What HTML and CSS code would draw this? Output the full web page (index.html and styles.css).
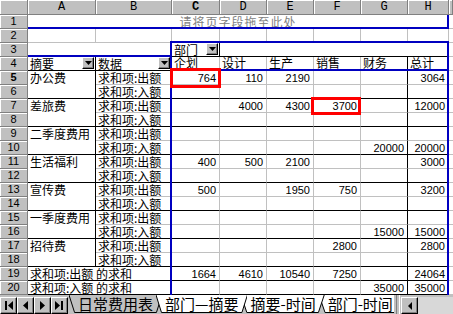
FILE: index.html
```html
<!DOCTYPE html>
<html>
<head>
<meta charset="utf-8">
<title>部门—摘要</title>
<link rel="stylesheet" href="styles.css">
</head>
<body>
<div class="sheet">
  <div class="grid">
    <div class="corner"></div>
    <div class="ch">A</div><div class="ch">B</div><div class="ch sel">C</div><div class="ch">D</div><div class="ch">E</div><div class="ch">F</div><div class="ch">G</div><div class="ch">H</div><div class="ch"></div>

    <div class="rh">1</div>
    <div class="c s8 page">请将页字段拖至此处</div>
    <div class="c x"></div>

    <div class="rh">2</div>
    <div class="c"></div><div class="c"></div><div class="c"></div><div class="c"></div><div class="c"></div><div class="c"></div><div class="c"></div><div class="c"></div><div class="c x"></div>

    <div class="rh">3</div>
    <div class="c s2 bb nr"></div>
    <div class="c fld bb br"><span class="fl">部门</span><span class="dd"><svg width="7" height="4" viewBox="0 0 7 4"><polygon points="0,0 7,0 3.5,4" fill="#000"/></svg></span></div>
    <div class="c s5 bb"></div>
    <div class="c x"></div>

    <div class="rh">4</div>
    <div class="c fld bb br"><span class="fl">摘要</span><span class="dd"><svg width="7" height="4" viewBox="0 0 7 4"><polygon points="0,0 7,0 3.5,4" fill="#000"/></svg></span></div>
    <div class="c fld bb"><span class="fl">数据</span><span class="dd"><svg width="7" height="4" viewBox="0 0 7 4"><polygon points="0,0 7,0 3.5,4" fill="#000"/></svg></span></div>
    <div class="c hd bb">企划</div><div class="c hd bb">设计</div><div class="c hd bb">生产</div><div class="c hd bb">销售</div><div class="c hd bb br">财务</div><div class="c hd bb">总计</div>
    <div class="c x"></div>

    <div class="rh sel">5</div>
    <div class="c r2 br bb">办公费</div>
    <div class="c">求和项:出额</div>
    <div class="c n">764</div><div class="c n">110</div><div class="c n">2190</div><div class="c n"></div><div class="c n br"></div><div class="c n">3064</div>
    <div class="c x"></div>
    <div class="rh">6</div>
    <div class="c bb">求和项:入额</div>
    <div class="c n bb"></div><div class="c n bb"></div><div class="c n bb"></div><div class="c n bb"></div><div class="c n bb br"></div><div class="c n bb"></div>
    <div class="c x"></div>

    <div class="rh">7</div>
    <div class="c r2 br bb">差旅费</div>
    <div class="c">求和项:出额</div>
    <div class="c n"></div><div class="c n">4000</div><div class="c n">4300</div><div class="c n">3700</div><div class="c n br"></div><div class="c n">12000</div>
    <div class="c x"></div>
    <div class="rh">8</div>
    <div class="c bb">求和项:入额</div>
    <div class="c n bb"></div><div class="c n bb"></div><div class="c n bb"></div><div class="c n bb"></div><div class="c n bb br"></div><div class="c n bb"></div>
    <div class="c x"></div>

    <div class="rh">9</div>
    <div class="c r2 br bb">二季度费用</div>
    <div class="c">求和项:出额</div>
    <div class="c n"></div><div class="c n"></div><div class="c n"></div><div class="c n"></div><div class="c n br"></div><div class="c n"></div>
    <div class="c x"></div>
    <div class="rh">10</div>
    <div class="c bb">求和项:入额</div>
    <div class="c n bb"></div><div class="c n bb"></div><div class="c n bb"></div><div class="c n bb"></div><div class="c n bb br">20000</div><div class="c n bb">20000</div>
    <div class="c x"></div>

    <div class="rh">11</div>
    <div class="c r2 br bb">生活福利</div>
    <div class="c">求和项:出额</div>
    <div class="c n">400</div><div class="c n">500</div><div class="c n">2100</div><div class="c n"></div><div class="c n br"></div><div class="c n">3000</div>
    <div class="c x"></div>
    <div class="rh">12</div>
    <div class="c bb">求和项:入额</div>
    <div class="c n bb"></div><div class="c n bb"></div><div class="c n bb"></div><div class="c n bb"></div><div class="c n bb br"></div><div class="c n bb"></div>
    <div class="c x"></div>

    <div class="rh">13</div>
    <div class="c r2 br bb">宣传费</div>
    <div class="c">求和项:出额</div>
    <div class="c n">500</div><div class="c n"></div><div class="c n">1950</div><div class="c n">750</div><div class="c n br"></div><div class="c n">3200</div>
    <div class="c x"></div>
    <div class="rh">14</div>
    <div class="c bb">求和项:入额</div>
    <div class="c n bb"></div><div class="c n bb"></div><div class="c n bb"></div><div class="c n bb"></div><div class="c n bb br"></div><div class="c n bb"></div>
    <div class="c x"></div>

    <div class="rh">15</div>
    <div class="c r2 br bb">一季度费用</div>
    <div class="c">求和项:出额</div>
    <div class="c n"></div><div class="c n"></div><div class="c n"></div><div class="c n"></div><div class="c n br"></div><div class="c n"></div>
    <div class="c x"></div>
    <div class="rh">16</div>
    <div class="c bb">求和项:入额</div>
    <div class="c n bb"></div><div class="c n bb"></div><div class="c n bb"></div><div class="c n bb"></div><div class="c n bb br">15000</div><div class="c n bb">15000</div>
    <div class="c x"></div>

    <div class="rh">17</div>
    <div class="c r2 br bb">招待费</div>
    <div class="c">求和项:出额</div>
    <div class="c n"></div><div class="c n"></div><div class="c n"></div><div class="c n">2800</div><div class="c n br"></div><div class="c n">2800</div>
    <div class="c x"></div>
    <div class="rh">18</div>
    <div class="c bb">求和项:入额</div>
    <div class="c n bb"></div><div class="c n bb"></div><div class="c n bb"></div><div class="c n bb"></div><div class="c n bb br"></div><div class="c n bb"></div>
    <div class="c x"></div>

    <div class="rh">19</div>
    <div class="c s2 bb">求和项:出额 的求和</div>
    <div class="c n bb">1664</div><div class="c n bb">4610</div><div class="c n bb">10540</div><div class="c n bb">7250</div><div class="c n bb br"></div><div class="c n bb">24064</div>
    <div class="c x"></div>
    <div class="rh">20</div>
    <div class="c s2 bb">求和项:入额 的求和</div>
    <div class="c n bb"></div><div class="c n bb"></div><div class="c n bb"></div><div class="c n bb"></div><div class="c n bb br">35000</div><div class="c n bb">35000</div>
    <div class="c x"></div>
  </div>

  <div class="overlay">
    <div class="zone zone-page"></div>
    <div class="zone zone-row"></div>
    <div class="zone zone-col"></div>
    <div class="zone zone-data"></div>
    <div class="mark m-c5"></div>
    <div class="mark m-f7"></div>
  </div>
</div>

<div class="tabbar">
  <div class="navs">
    <span class="nav"><svg width="9" height="9" viewBox="0 0 9 9"><rect x="1" y="0" width="2" height="9" fill="#000"/><polygon points="9,0 9,9 4,4.5" fill="#000"/></svg></span>
    <span class="nav"><svg width="9" height="9" viewBox="0 0 9 9"><polygon points="7,0 7,9 2,4.5" fill="#000"/></svg></span>
    <span class="nav"><svg width="9" height="9" viewBox="0 0 9 9"><polygon points="2,0 2,9 7,4.5" fill="#000"/></svg></span>
    <span class="nav"><svg width="9" height="9" viewBox="0 0 9 9"><polygon points="0,0 0,9 5,4.5" fill="#000"/><rect x="6" y="0" width="2" height="9" fill="#000"/></svg></span>
  </div>
  <div class="tabs">
    <div class="tab t1"><svg class="tabshape" viewBox="0 0 100 18" preserveAspectRatio="none"><polygon class="tf" points="0,0 100,0 94,17.5 6,17.5"/><polyline class="ts" points="0,0 6,17.5 94,17.5 100,0"/></svg><span class="tl">日常费用表</span></div>
    <div class="tab t2"><svg class="tabshape" viewBox="0 0 100 18" preserveAspectRatio="none"><polygon class="tf" points="0,0 100,0 94,17.5 6,17.5"/><polyline class="ts" points="0,0 6,17.5 94,17.5 100,0"/></svg><span class="tl">部门—摘要</span></div>
    <div class="tab t3"><svg class="tabshape" viewBox="0 0 100 18" preserveAspectRatio="none"><polygon class="tf" points="0,0 100,0 93,17.5 7,17.5"/><polyline class="ts" points="0,0 7,17.5 93,17.5 100,0"/></svg><span class="tl">摘要-时间</span></div>
    <div class="tab t4"><svg class="tabshape" viewBox="0 0 100 18" preserveAspectRatio="none"><polygon class="tf" points="0,0 100,0 100,17.5 8,17.5"/><polyline class="ts" points="0,0 8,17.5 100,17.5"/></svg><span class="tl">部门-时间</span></div>
  </div>
  <div class="split"></div>
  <div class="hscroll">
    <span class="sbtn"><svg width="6" height="8" viewBox="0 0 6 8"><polygon points="5,0 5,8 1,4" fill="#000"/></svg></span>
    <span class="track"></span>
  </div>
</div>
</body>
</html>
```

FILE: styles.css
```css
* { box-sizing: border-box; }
html, body { margin: 0; padding: 0; }
body {
  width: 453px;
  height: 314px;
  overflow: hidden;
  background: #fff;
  color: #000;
  font-family: "Noto Sans CJK SC", sans-serif;
  font-size: 12px;
}

.sheet { position: relative; height: 295px; }

.grid, .overlay {
  display: grid;
  grid-template-columns: 28px 68px 76px 48px 47px 47px 47px 47px 41px 1fr;
  grid-template-rows: 15px repeat(20, 14px);
}
.overlay { position: absolute; inset: 0; pointer-events: none; }

/* headers */
.corner, .ch, .rh {
  background: #c0c0c0;
  border-right: 1px solid #808080;
  border-bottom: 1px solid #808080;
  box-shadow: inset 1px 1px 0 #fff;
}
.ch {
  font-family: "Liberation Mono", monospace;
  font-size: 12px;
  line-height: 14px;
  text-align: center;
}
.rh {
  font-family: "Liberation Sans", sans-serif;
  font-size: 11px;
  line-height: 13px;
  text-align: center;
}
.sel { font-weight: bold; }

/* cells */
.c {
  border-right: 1px solid #c0c0c0;
  border-bottom: 1px solid #c0c0c0;
  padding: 0 2px;
  line-height: 13px;
  white-space: nowrap;
}
.n {
  text-align: right;
  padding: 1px 3px 0 2px;
  font-family: "Liberation Sans", sans-serif;
  font-size: 11px;
  line-height: 12px;
}
.br { border-right-color: #000; }
.bb { border-bottom-color: #000; }
.nr { border-right-color: transparent; }
.x { border-right: none; }
.s2 { grid-column: span 2; }
.s5 { grid-column: span 5; }
.s8 { grid-column: span 8; }
.r2 { grid-row: span 2; }

.page {
  color: #808080;
  text-align: center;
  letter-spacing: 1px;
  font-size: 12px;
}

.fld {
  display: flex;
  justify-content: space-between;
  align-items: flex-start;
  padding-right: 1px;
}
.dd {
  width: 12px;
  height: 12px;
  flex: none;
  background: #c0c0c0;
  border: 1px solid;
  border-color: #fff #000 #000 #fff;
  box-shadow: inset -1px -1px 0 #808080;
  display: flex;
  align-items: center;
  justify-content: center;
}
.hd { line-height: 12px; }

/* overlays */
.zone { border: 0 solid #0000c0; }
.zone-page { grid-column: 2 / 10; grid-row: 2 / 3; border-right-width: 2px; border-bottom-width: 2px; }
.zone-row { grid-column: 2 / 4; grid-row: 5 / 22; margin-top: -2px; border-top-width: 2px; border-right-width: 2px; }
.zone-col { grid-column: 4 / 10; grid-row: 4 / 6; margin: -2px 0 0 -2px; border-width: 2px; }
.zone-data { grid-column: 4 / 10; grid-row: 6 / 22; margin: -2px 0 0 -2px; border-left-width: 2px; border-right-width: 2px; }

.mark { border: 3px solid #f00; }
.m-c5 { grid-column: 4 / 5; grid-row: 6 / 7; margin: -3px -1px -3px -2px; }
.m-f7 { grid-column: 7 / 8; grid-row: 8 / 9; margin: -2px 0 -2px -3px; }

/* sheet tabs */
.tabbar {
  display: flex;
  height: 19px;
  background: #c0c0c0;
}
.navs { display: flex; padding-top: 2px; }
.nav, .sbtn {
  width: 17px;
  height: 17px;
  background: #c0c0c0;
  border: 1px solid;
  border-color: #fff #000 #000 #fff;
  box-shadow: inset -1px -1px 0 #808080;
  display: flex;
  align-items: center;
  justify-content: center;
}
.tabs {
  display: flex;
  width: 327px;
  margin-left: 1px;
}
.tab {
  position: relative;
  flex: none;
  height: 18px;
  padding: 0 9px;
  margin-left: -6px;
  font-family: "Noto Sans CJK SC", sans-serif;
  font-size: 15px;
  line-height: 18px;
}
.t1 { margin-left: 0; z-index: 1; }
.t2 { z-index: 4; }
.t3 { z-index: 3; }
.t4 { z-index: 2; padding-right: 1px; }
.tabshape { position: absolute; left: 0; top: 0; width: 100%; height: 100%; }
.tf { fill: #fff; }
.t1 .tf { fill: #c0c0c0; }
.ts { fill: none; stroke: #000; stroke-width: 1; vector-effect: non-scaling-stroke; }
.tl { position: relative; }
.split {
  flex: none;
  width: 4px;
  border-left: 1px solid #808080;
  border-right: 1px solid #fff;
  background: #c0c0c0;
  position: relative;
  z-index: 5;
}
.hscroll { flex: 1; display: flex; padding-top: 2px; padding-left: 1px; position: relative; z-index: 5; background: #c0c0c0; }
.track { flex: 1; background: #d8d8d8; }
```
